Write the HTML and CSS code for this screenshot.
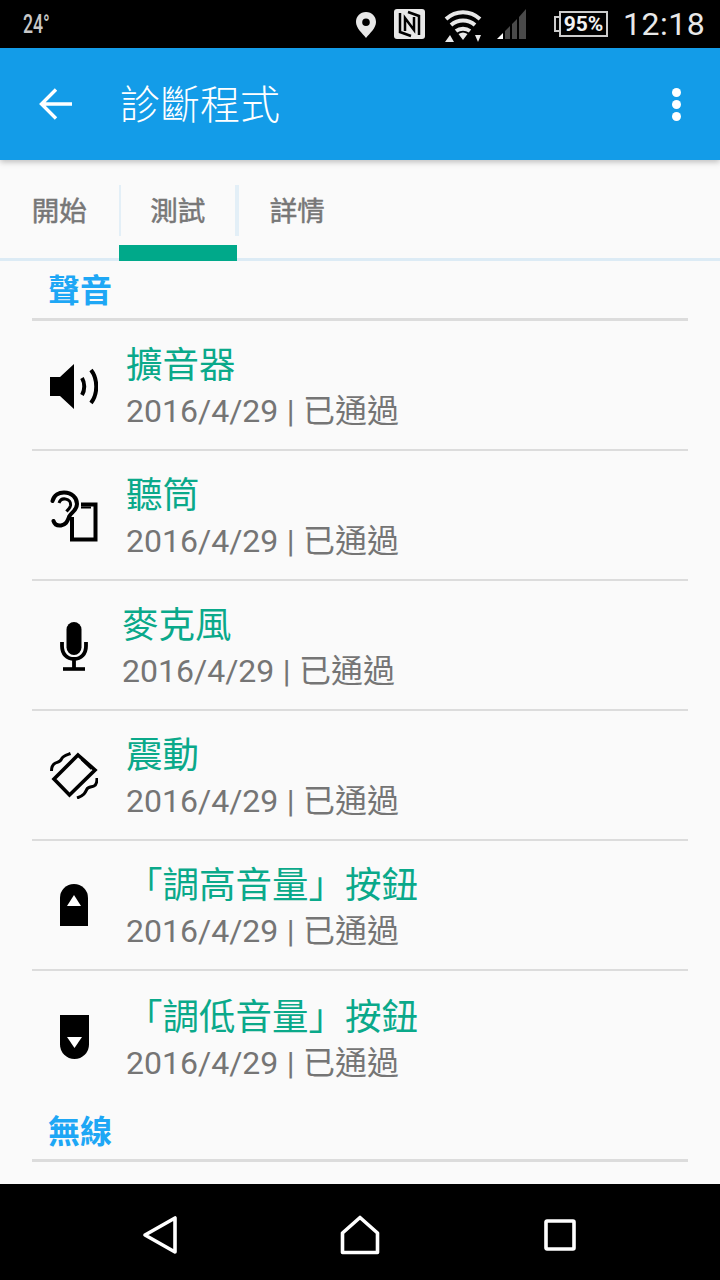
FILE: index.html
```html
<!DOCTYPE html>
<html lang="zh-Hant">
<head>
  <meta charset="UTF-8">
  <title>診斷程式</title>
  <link rel="stylesheet" href="styles.css">
</head>
<body>
  <div class="status-bar">
    <div class="temp-wrap"><span class="temp">24°</span></div>
    <svg class="st-pin" width="22" height="26" viewBox="0 0 22 26"><path fill="#e8e8e8" fill-rule="evenodd" d="M11 0C5 0 1 4.500 1 10c0 6 6 11 10 16 4-5 10-10 10-16C21 4.500 17 0 11 0zm0 6.500a3.800 3.800 0 1 1 0 7.600 3.800 3.800 0 0 1 0-7.600z"/></svg>
    <svg class="st-nfc" width="31" height="30" viewBox="0 0 31 30"><rect width="31" height="30" rx="3" fill="#e8e8e8"/><path fill="none" stroke="#000" stroke-width="2.500" d="M6 4v19l11 4M25 26V7L14 3"/><path fill="none" stroke="#000" stroke-width="2.500" d="M11 22V9l9 12V8"/></svg>
    <svg class="st-wifi" width="38" height="32" viewBox="0 0 38 32"><g fill="none" stroke="#e8e8e8" stroke-width="4"><path d="M2 9c10-9 24-9 34 0"/><path d="M7 15c7-6 17-6 24 0"/><path d="M12 21c4-3 10-3 14 0"/></g><path fill="#e8e8e8" d="M14.500 24c3-2 6-2 9 0l-4.500 6zM6 25l4 7H1zM31 25h6l-3 7z"/></svg>
    <svg class="st-signal" width="30" height="30" viewBox="0 0 30 30"><path fill="#fff" d="M0 30l6-6v6z"/><path fill="#4a4a4a" d="M8 22l5-5v13H8zM15 15l5-5v20h-5zM22 8l7-8v30h-7z"/></svg>
    <div class="battery"><span class="battery-cap"></span><span class="battery-body">95%</span></div>
    <span class="clock">12:18</span>
  </div>

  <header class="app-bar">
    <svg class="back" width="34" height="32" viewBox="0 0 34 32"><path fill="none" stroke="#fff" stroke-width="3.400" d="M33 16H3M17 1.500L2.500 16 17 30.500"/></svg>
    <h1 class="app-title">診斷程式</h1>
    <div class="more"><i></i><i></i><i></i></div>
  </header>

  <nav class="tabs">
    <div class="tab"><span class="tab-label">開始</span></div>
    <div class="tab active"><span class="tab-label sep">測試</span></div>
    <div class="tab"><span class="tab-label sep">詳情</span></div>
  </nav>

  <main class="content">
    <h2 class="section">聲音</h2>

    <div class="row">
      <div class="icon icon-low">
        <svg width="48" height="46" viewBox="0 0 48 46"><path d="M0 13h10L24 0v45L10 32H0z"/><path fill="none" stroke="#000" stroke-width="4" d="M32 14c3 5 3 12 0 17M41 6c7 9 7 24 0 33"/></svg>
      </div>
      <div class="text">
        <div class="name">擴音器</div>
        <div class="meta">2016/4/29 | 已通過</div>
      </div>
    </div>

    <div class="row">
      <div class="icon icon-low">
        <svg width="48" height="53" viewBox="0 0 48 53"><path fill="none" stroke="#000" stroke-width="4" stroke-linecap="round" d="M2.500 11C4 5 9 2.500 14 2.500c8 0 13 5.500 13 11.500 0 6-5 8-7.500 12-2 4-2.500 8.500-8.500 9.500-4 .5-6.500-1.500-7.500-4.500"/><path fill="none" stroke="#000" stroke-width="3" d="M9 13c1-3 3.500-4.500 6.500-4 3.500.5 5.500 3 5 6.500-.5 3-2.500 4-4 6"/><path fill="none" stroke="#000" stroke-width="4" d="M22 27v22.500h23.500V14.500H31"/><path stroke="#000" stroke-width="2" d="M31 17.500h10"/></svg>
      </div>
      <div class="text">
        <div class="name">聽筒</div>
        <div class="meta">2016/4/29 | 已通過</div>
      </div>
    </div>

    <div class="row row-tight">
      <div class="icon icon-low">
        <svg width="28" height="49" viewBox="0 0 28 49"><rect x="6.500" y="0" width="15" height="33" rx="7.500"/><path fill="none" stroke="#000" stroke-width="3.800" d="M2 20v4c0 8 5 13 12 13s12-5 12-13v-4M14 37v9"/><path stroke="#000" stroke-width="3.600" d="M3 47h22"/></svg>
      </div>
      <div class="text">
        <div class="name">麥克風</div>
        <div class="meta">2016/4/29 | 已通過</div>
      </div>
    </div>

    <div class="row">
      <div class="icon">
        <svg width="48" height="48" viewBox="0 -1 48 48"><path fill="none" stroke="#000" stroke-width="3.600" d="M28 3l17 15-25.500 25L4 27z"/><path stroke="#000" stroke-width="2" d="M31.500 7.500l10 9.500"/><path fill="none" stroke="#000" stroke-width="3" d="M1.500 19c0-4 2-7 4-8s5-1 6-4 5-4 9-5.500M47 26c0 4-1 7-3 8s-6 1-7 3-2 4-3 5-4 3-7 4"/></svg>
      </div>
      <div class="text">
        <div class="name">震動</div>
        <div class="meta">2016/4/29 | 已通過</div>
      </div>
    </div>

    <div class="row">
      <div class="icon">
        <svg width="28" height="42" viewBox="0 0 28 42"><path d="M0 42V14a14 14 0 0 1 28 0v28z"/><path fill="#fff" d="M14 11l7 11H7z"/></svg>
      </div>
      <div class="text">
        <div class="name">「調高音量」按鈕</div>
        <div class="meta">2016/4/29 | 已通過</div>
      </div>
    </div>

    <div class="row">
      <div class="icon">
        <svg width="29" height="44" viewBox="0 0 29 44"><path d="M0 0h29v29.500a14.500 14.500 0 0 1-29 0z"/><path fill="#fff" d="M7 22h15l-7.500 11z"/></svg>
      </div>
      <div class="text">
        <div class="name">「調低音量」按鈕</div>
        <div class="meta">2016/4/29 | 已通過</div>
      </div>
    </div>

    <h2 class="section">無線</h2>
  </main>

  <footer class="nav-bar">
    <svg width="36" height="40" viewBox="0 0 36 40"><path fill="none" stroke="#fff" stroke-width="3.600" stroke-linejoin="round" d="M33 3v34L3 20z"/></svg>
    <svg width="40" height="40" viewBox="0 0 40 40"><path fill="none" stroke="#fff" stroke-width="3.600" stroke-linejoin="round" d="M20 2.500L2.500 18v19.500h35V18z"/></svg>
    <svg width="32" height="32" viewBox="0 0 32 32"><rect x="2" y="2" width="28" height="28" rx="1" fill="none" stroke="#fff" stroke-width="3.600"/></svg>
  </footer>
</body>
</html>
```

FILE: styles.css
```css
* { box-sizing: border-box; }
html, body { margin: 0; height: 1280px; overflow: hidden; }
body { display: flex; flex-direction: column; background: #fafafa; font-family: "Noto Sans CJK TC", sans-serif; }

.status-bar { height: 48px; flex: none; display: flex; align-items: center; background: #000; color: #e8e8e8; font-family: Roboto, sans-serif; }
.temp-wrap { width: 355px; padding-left: 23px; }
.temp { display: block; width: 40px; font-size: 26px; font-weight: 500; color: #c8c8c8; transform: scaleX(0.68); transform-origin: left center; }
.st-pin { margin-top: 2px; }
.st-nfc { margin-left: 17px; }
.st-wifi { margin-left: 19px; margin-top: 4px; }
.st-signal { margin-left: 15px; }
.battery { display: flex; align-items: center; margin-left: 27px; }
.battery-cap { width: 5px; height: 16px; border: 2px solid #ccc; border-right: 0; }
.battery-body { width: 49px; height: 26px; border: 2px solid #ccc; font-size: 21px; font-weight: 700; line-height: 22px; text-align: center; color: #f2f2f2; }
.clock { margin-left: 15px; font-size: 32px; letter-spacing: 0.5px; }

.app-bar { height: 112px; flex: none; display: flex; align-items: center; position: relative; background: #139ce8; box-shadow: 0 2px 6px rgba(0,0,0,0.25); color: #fff; }
.back { margin-left: 39px; }
.app-title { margin: 0 0 4px 47px; font-size: 40px; font-weight: 300; line-height: 1; flex: 1; }
.more { width: 18px; margin-right: 35px; display: flex; flex-direction: column; align-items: center; gap: 3px; }
.more i { width: 9px; height: 9px; border-radius: 50%; background: #fff; }

.tabs { height: 101px; flex: none; display: flex; border-bottom: 3px solid #dcebf5; }
.tab { width: 118.500px; height: 101px; padding-top: 25px; font-size: 27.500px; color: #777; text-align: center; -webkit-text-stroke: 0.5px #777; }
.tab.active { border-bottom: 16px solid #00a98a; }
.tab-label { display: block; height: 51px; line-height: 49px; }
.tab-label.sep { border-left: 2px solid #e3eff7; }
.tab.active .tab-label { border-right: 2px solid #e3eff7; }

.content { flex: 1; overflow: hidden; padding: 0 32px; }
.section { margin: 0; height: 60px; padding-left: 16px; border-bottom: 3px solid #dcdcdc; font-size: 32px; font-weight: 700; line-height: 54px; color: #1ea7f5; }

.row { height: 130px; display: flex; align-items: center; border-bottom: 2px solid #dcdcdc; }
.row:nth-of-type(n+6) { height: 131px; border-bottom: 0; }
.icon { width: 48px; margin-left: 18px; margin-right: 28px; display: flex; justify-content: center; flex: none; }
.icon-low { margin-top: 3px; }
.row-tight .icon { margin-right: 24px; }
.text { padding-top: 4px; }
.name { font-size: 36.500px; line-height: 44px; color: #0aa98a; }
.meta { margin-top: 4px; font-family: Roboto, "Noto Sans CJK TC", sans-serif; font-size: 32px; line-height: 44px; word-spacing: 0.5px; color: #757575; }

.nav-bar { height: 96px; flex: none; display: grid; grid-template-columns: repeat(3, 200px); justify-content: center; justify-items: center; align-items: center; padding-top: 6px; background: #000; }
```
